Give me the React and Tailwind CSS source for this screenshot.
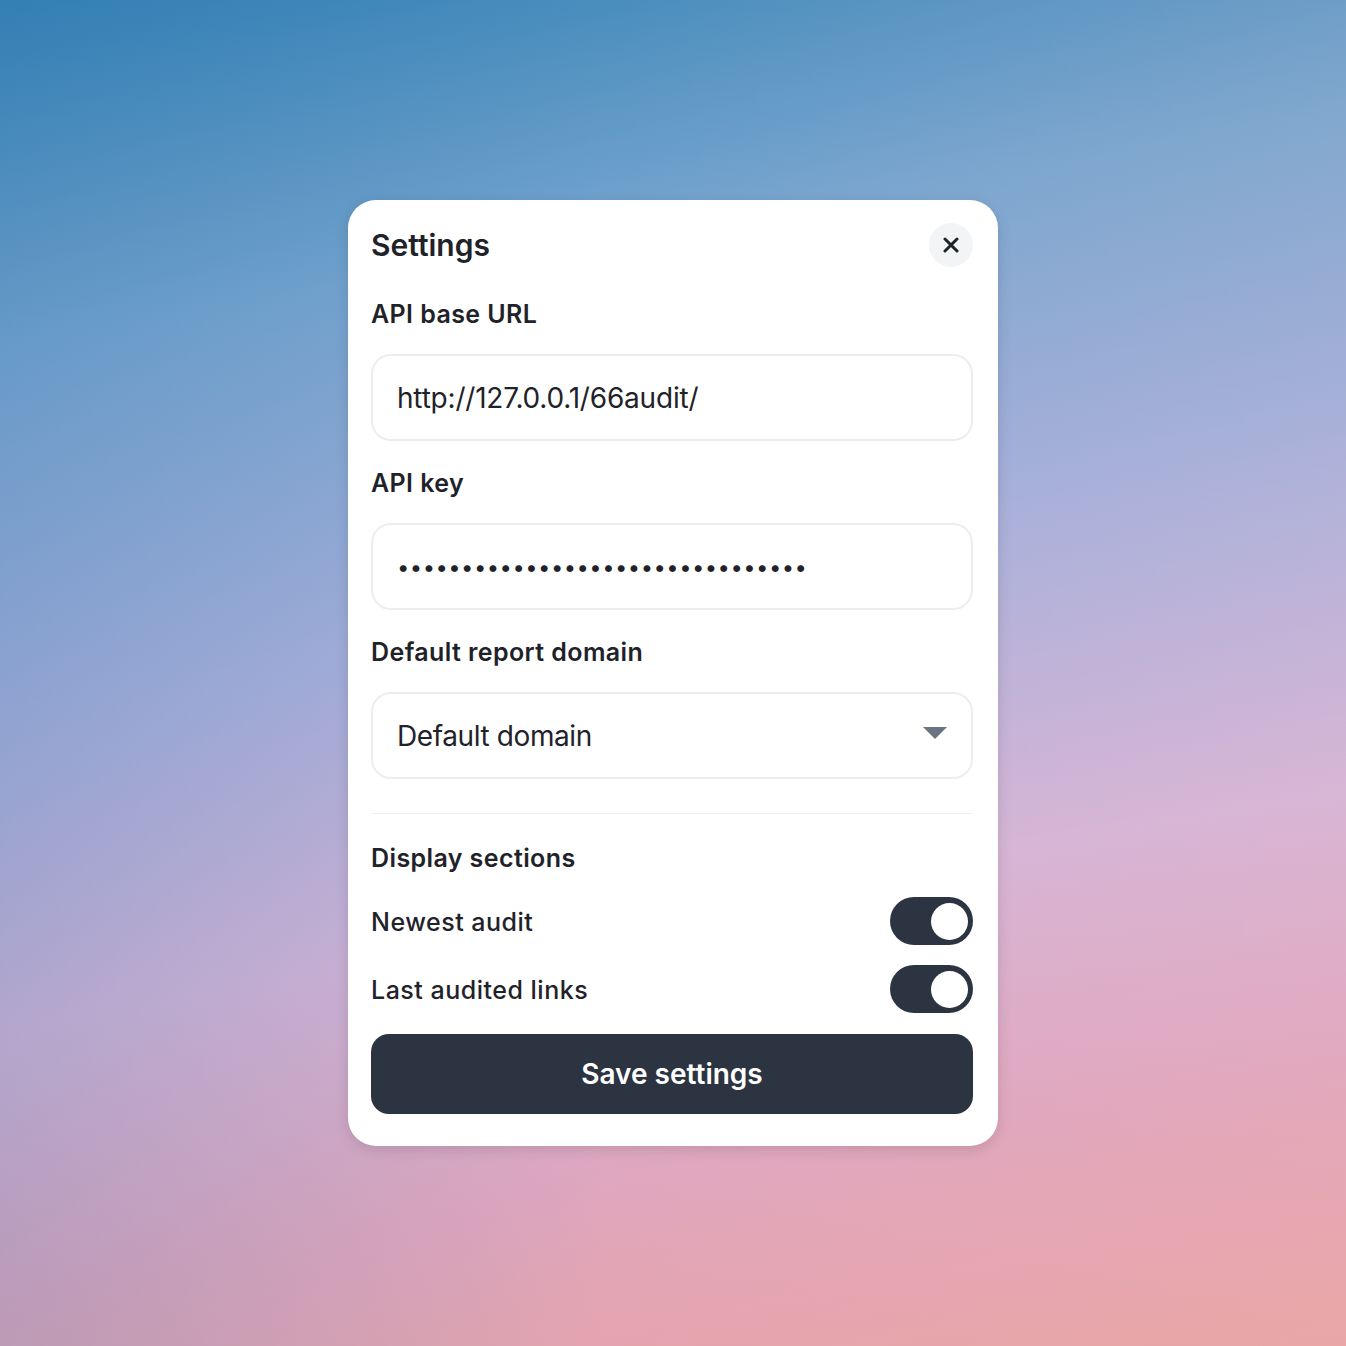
const font = { fontFamily: "Inter, 'Noto Sans', sans-serif" };

// field label + boxed value
const Field = ({ label, children, className = "" }) => (
  <div className={className}>
    <div className="h-[34px] leading-[34px] text-[25px] font-semibold tracking-[0.4px] text-[#1f2329]">{label}</div>
    <div className="mt-[23px] h-[87px] rounded-[20px] border-2 border-[#ededed] bg-white flex items-center px-[24px] relative">
      {children}
    </div>
  </div>
);

const Toggle = () => (
  <div className="w-[83px] h-[48px] rounded-full bg-[#2d3441] flex items-center justify-end pr-[5px]">
    <div className="w-[37px] h-[37px] rounded-full bg-white" />
  </div>
);

const App = () => {
  return (
    <div
      style={font}
      className="w-[1346px] h-[1346px] flex justify-center pt-[200px] bg-[linear-gradient(170deg,#3583b6_0%,#77a5cf_22%,#a9b0db_45%,#d5b4d6_65%,#e0a6bd_82%,#e8a3a3_100%)] relative overflow-hidden"
    >
      {/* left side tint */}
      <div className="absolute inset-0 bg-[linear-gradient(90deg,rgba(40,110,170,0.2)_0%,rgba(255,255,255,0)_45%,rgba(255,200,200,0.08)_100%)]" />

      {/* card */}
      <div className="relative w-[650px] h-[946px] bg-white rounded-[28px] shadow-[0_4px_14px_rgba(0,0,0,0.12)] pl-[23px] pr-[25px] pt-[23px]">

        {/* header */}
        <div className="h-[44px] flex items-center justify-between">
          <h1 className="text-[30px] font-semibold text-[#1f2329]">Settings</h1>
          <button className="w-[44px] h-[44px] rounded-full bg-[#f3f4f6] flex items-center justify-center">
            <svg width="16" height="16" viewBox="0 0 16 16">
              <path d="M2 2 L14 14 M14 2 L2 14" stroke="#1f2329" strokeWidth="3" strokeLinecap="round" />
            </svg>
          </button>
        </div>

        <Field label="API base URL" className="mt-[30px]">
          <span className="text-[28px] text-[#1f2329] tracking-[-0.2px]">http://127.0.0.1/66audit/</span>
        </Field>

        <Field label="API key" className="mt-[25px]">
          <span className="text-[22px] text-[#1f2329] tracking-[0.45px] mt-[2px]">••••••••••••••••••••••••••••••••</span>
        </Field>

        <Field label="Default report domain" className="mt-[25px]">
          <span className="text-[28px] text-[#1f2329] tracking-[-0.4px]">Default domain</span>
          <svg className="absolute right-[24px] top-[33px]" width="24" height="12" viewBox="0 0 24 12">
            <path d="M0 0 H24 L12 12 Z" fill="#6b7280" />
          </svg>
        </Field>

        {/* divider */}
        <div className="mt-[34px] h-[1px] bg-[#f0f0f0]" />

        <div className="mt-[27px] h-[34px] leading-[34px] text-[25px] font-semibold tracking-[0.4px] text-[#1f2329]">Display sections</div>

        {/* toggles */}
        <div className="mt-[22px] flex flex-col gap-[20px]">
          <div className="h-[48px] flex items-center justify-between">
            <span className="text-[25px] font-medium tracking-[0.5px] text-[#1f2329] mt-[3px]">Newest audit</span>
            <Toggle />
          </div>
          <div className="h-[48px] flex items-center justify-between">
            <span className="text-[25px] font-medium tracking-[0.5px] text-[#1f2329] mt-[3px]">Last audited links</span>
            <Toggle />
          </div>
        </div>

        <button className="mt-[21px] w-full h-[80px] rounded-[18px] bg-[#2d3441] text-white text-[28px] font-semibold">
          Save settings
        </button>
      </div>
    </div>
  );
};

export default App;
